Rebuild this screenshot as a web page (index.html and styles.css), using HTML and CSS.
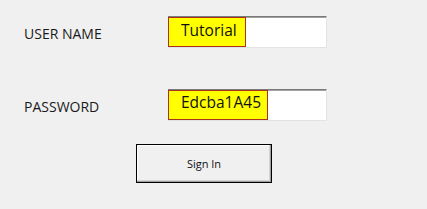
FILE: index.html
```html
<!DOCTYPE html>
<html lang="en">
<head>
    <meta charset="UTF-8">
    <meta name="viewport" content="width=device-width, initial-scale=1.0">
    <title>Login</title>
    <link rel="stylesheet" href="styles.css">
</head>
<body>
    <div class="login-form">
        <div class="form-row">
            <label class="field-label">USER NAME</label>
            <div class="textbox">
                <span class="value value-user">Tutorial</span>
            </div>
        </div>
        <div class="form-row">
            <label class="field-label">PASSWORD</label>
            <div class="textbox">
                <span class="value value-pass">Edcba1A45</span>
            </div>
        </div>
        <div class="actions">
            <button class="sign-in">Sign In</button>
        </div>
    </div>
</body>
</html>
```

FILE: styles.css
```css
/* General Reset */
* { margin: 0; padding: 0; box-sizing: border-box; }
body { background-color: #f0f0f0; font-family: "Open Sans", "Liberation Sans", sans-serif; color: #1a1a1a; }
.login-form { padding: 16px 0 0 24px; }
.form-row { display: flex; align-items: flex-start; height: 32px; }
.form-row + .form-row { margin-top: 41px; }
.field-label { width: 144px; margin-top: 10px; font-size: 14px; line-height: 15px; }
.textbox { display: flex; width: 159px; height: 32px; background-color: #fff; border-top: 1px solid #7a7a7a; border-right: 1px solid #e3e3e3; border-bottom: 1px solid #e3e3e3; box-shadow: inset 0 1px #a0a0a0; }
.value { height: 30px; padding: 2px 0 0 12px; background-color: #ffff00; border: 1px solid #a8321e; font-size: 15.5px; line-height: 20px; color: #111; }
.value-user { width: 78px; }
.value-pass { width: 100px; padding-top: 1px; }
.actions { margin: 23px 0 0 112px; }
.sign-in { width: 136px; height: 39px; background-color: #f0f0f0; border: 1px solid #000; box-shadow: inset -1px -1px #a0a0a0, inset -2px -2px #d4d4d4, inset 1px 1px #fff; font-family: "Open Sans", "Liberation Sans", sans-serif; font-size: 11px; color: #111; cursor: pointer; }
```
